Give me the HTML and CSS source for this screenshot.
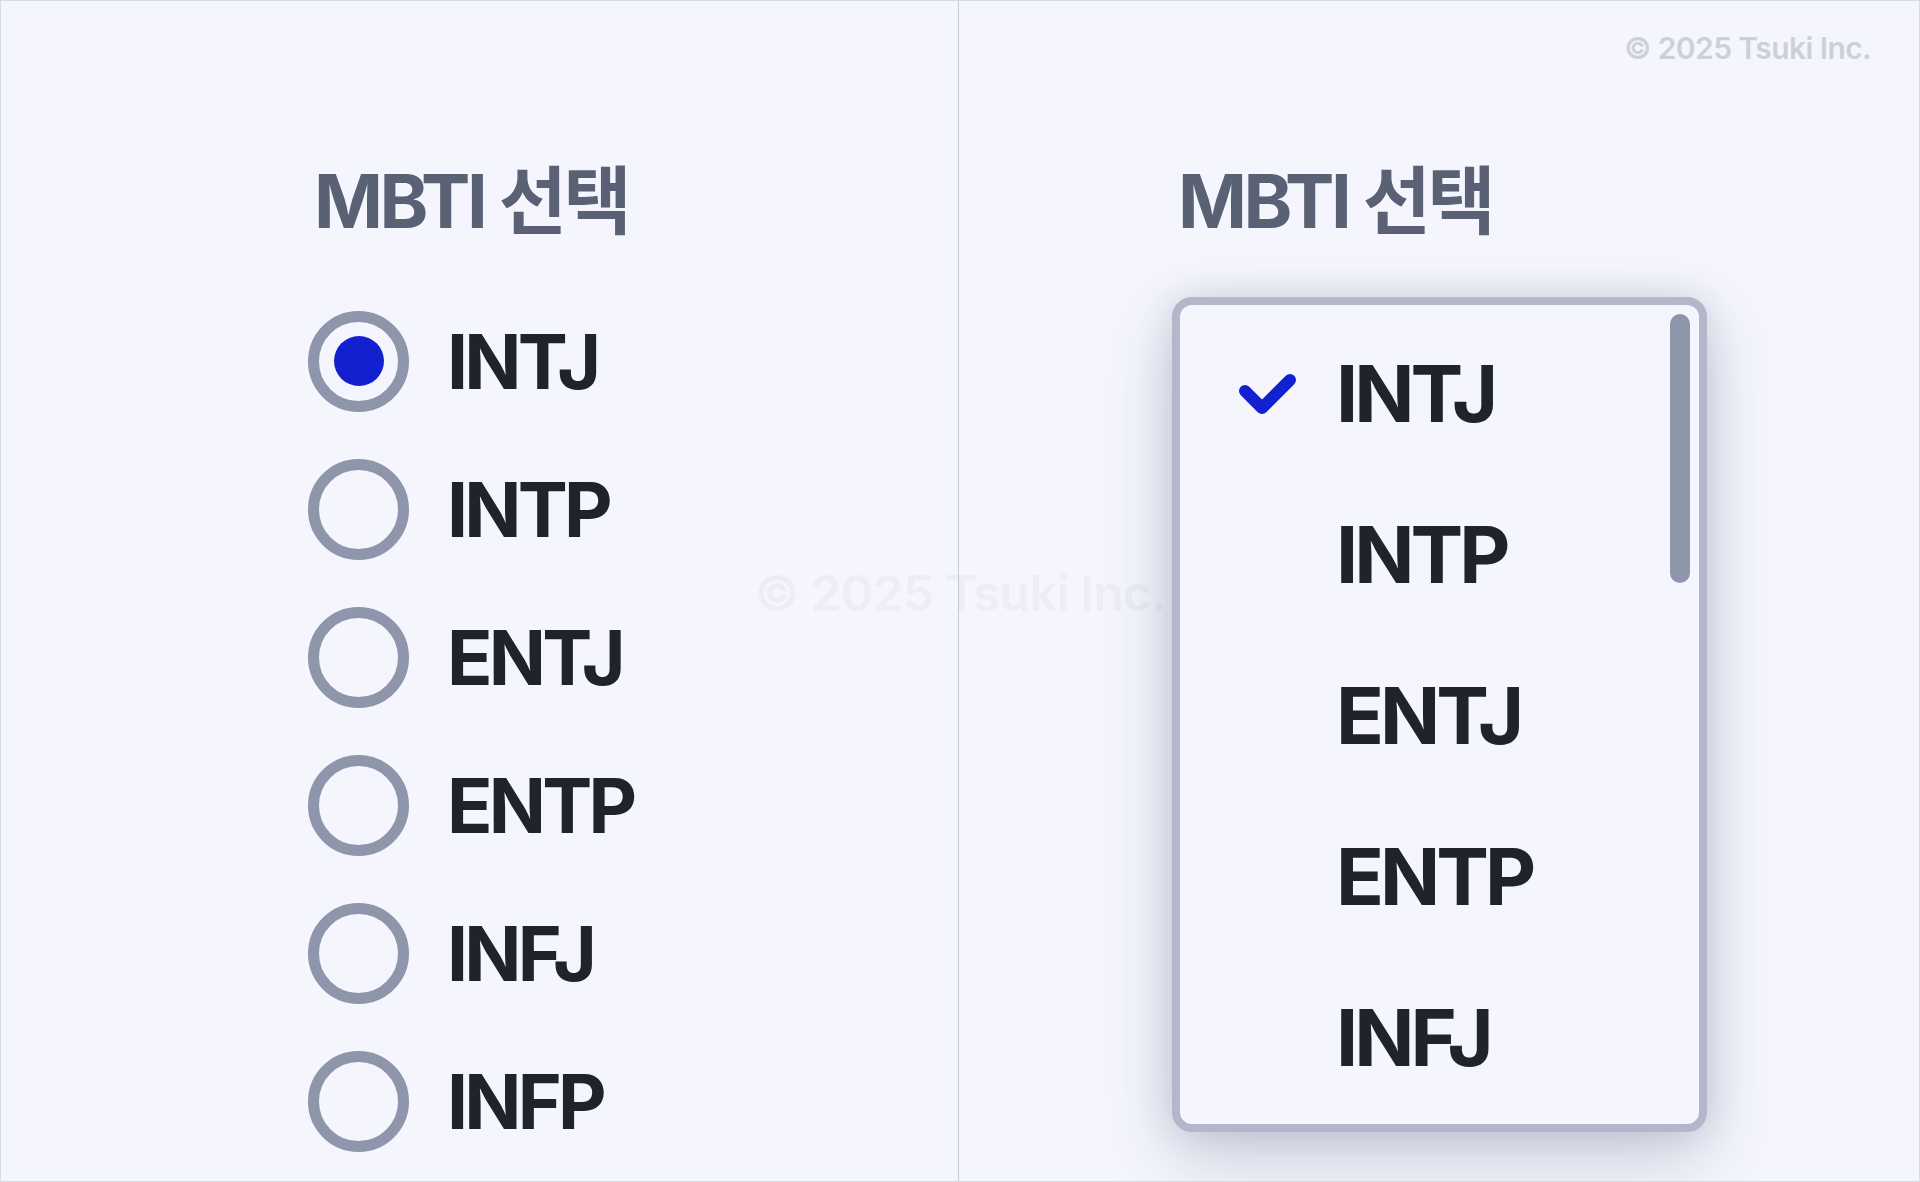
FILE: index.html
```html
<!DOCTYPE html>
<html lang="ko">
<head>
<meta charset="utf-8">
<title>MBTI 선택</title>
<link rel="stylesheet" href="styles.css">
</head>
<body>
<div class="page">
  <section class="panel panel-left">
    <h1 class="title">MBTI 선택</h1>
    <ul class="radio-list">
      <li class="radio-row"><span class="radio is-checked"></span><span class="radio-label">INTJ</span></li>
      <li class="radio-row"><span class="radio"></span><span class="radio-label">INTP</span></li>
      <li class="radio-row"><span class="radio"></span><span class="radio-label">ENTJ</span></li>
      <li class="radio-row"><span class="radio"></span><span class="radio-label">ENTP</span></li>
      <li class="radio-row"><span class="radio"></span><span class="radio-label">INFJ</span></li>
      <li class="radio-row"><span class="radio"></span><span class="radio-label">INFP</span></li>
    </ul>
  </section>
  <section class="panel panel-right">
    <h1 class="title">MBTI 선택</h1>
    <div class="dropdown">
      <ul class="options">
        <li class="option is-selected">
          <svg class="check" viewBox="0 0 60 48" width="60" height="48" aria-hidden="true"><polyline points="9,21 26,38 54,10" fill="none" stroke="#1220cf" stroke-width="12" stroke-linecap="round" stroke-linejoin="round"/></svg>
          <span class="option-label">INTJ</span>
        </li>
        <li class="option"><span class="check-space"></span><span class="option-label">INTP</span></li>
        <li class="option"><span class="check-space"></span><span class="option-label">ENTJ</span></li>
        <li class="option"><span class="check-space"></span><span class="option-label">ENTP</span></li>
        <li class="option"><span class="check-space"></span><span class="option-label">INFJ</span></li>
      </ul>
      <div class="scroll-thumb"></div>
    </div>
  </section>
  <div class="copyright">© 2025 Tsuki Inc.</div>
  <div class="watermark">© 2025 Tsuki Inc.</div>
</div>
</body>
</html>
```

FILE: styles.css
```css
html, body {
  margin: 0;
  padding: 0;
}

body {
  background: #f5f6fd;
  font-family: Inter, "Noto Sans CJK KR", sans-serif;
  color: #202329;
}

.page {
  position: relative;
  width: 1920px;
  height: 1182px;
  box-sizing: border-box;
  border: 1px solid #d9dbe4;
  display: grid;
  grid-template-columns: 958px 1fr;
  overflow: hidden;
}

.panel {
  padding-top: 154px;
  box-sizing: border-box;
}

.panel-left {
  border-right: 1px solid #c9ccd8;
  padding-left: 307px;
}

.panel-right {
  padding-left: 213px;
}

.title {
  margin: 0 0 0 6px;
  font-size: 74px;
  line-height: 92px;
  font-weight: 700;
  color: #5b6175;
  letter-spacing: -0.045em;
  white-space: nowrap;
}

.radio-list {
  list-style: none;
  margin: 40px 0 0;
  padding: 0;
}

.radio-row {
  height: 148px;
  display: flex;
  align-items: center;
  gap: 38px;
}

.radio {
  width: 101px;
  height: 101px;
  box-sizing: border-box;
  border: 11px solid #8f95aa;
  border-radius: 50%;
  display: flex;
  align-items: center;
  justify-content: center;
  flex: none;
}

.radio.is-checked::after {
  content: "";
  width: 50px;
  height: 50px;
  border-radius: 50%;
  background: #1220cf;
}

.radio-label {
  font-size: 75px;
  line-height: 1;
  font-weight: 700;
  letter-spacing: -0.05em;
  color: #202329;
}

.dropdown {
  position: relative;
  margin-top: 50px;
  width: 535px;
  height: 835px;
  box-sizing: border-box;
  border: 8px solid #b3b7c9;
  border-radius: 20px;
  background: #f5f6fd;
  overflow: hidden;
  box-shadow: 0 24px 70px rgba(40, 50, 90, 0.22), 0 0 34px rgba(40, 50, 90, 0.12);
}

.options {
  list-style: none;
  margin: 0;
  padding: 8px 0 0 56px;
}

.option {
  height: 161px;
  display: flex;
  align-items: center;
  gap: 40px;
}

.check, .check-space {
  width: 60px;
  height: 48px;
  flex: none;
  display: block;
}

.option-label {
  font-size: 79px;
  line-height: 1;
  font-weight: 700;
  letter-spacing: -0.05em;
  color: #202329;
}

.scroll-thumb {
  position: absolute;
  top: 9px;
  right: 9px;
  width: 20px;
  height: 269px;
  border-radius: 10px;
  background: #8f95aa;
}

.copyright {
  position: absolute;
  top: 30px;
  right: 48px;
  font-size: 30px;
  line-height: 34px;
  font-weight: 600;
  color: #cdd0dc;
  letter-spacing: -0.02em;
}

.watermark {
  position: absolute;
  left: 0;
  right: 0;
  top: 560px;
  text-align: center;
  font-size: 50px;
  line-height: 64px;
  font-weight: 600;
  color: rgba(160, 165, 190, 0.11);
  letter-spacing: -0.02em;
  pointer-events: none;
}
```
